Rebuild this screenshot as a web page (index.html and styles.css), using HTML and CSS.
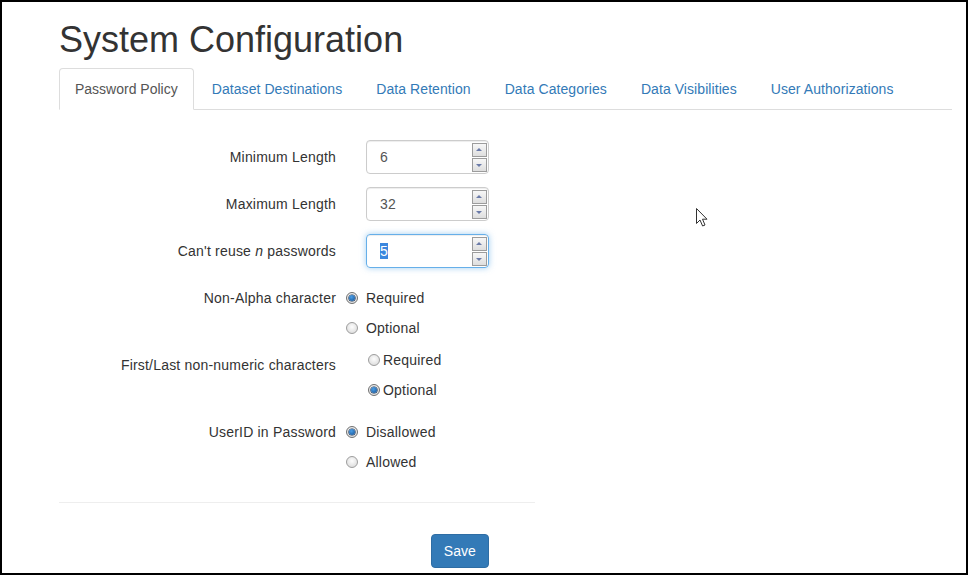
FILE: index.html
```
<!DOCTYPE html>
<html lang="en">
<head>
<meta charset="utf-8">
<title>System Configuration</title>
<link rel="stylesheet" href="styles.css">
</head>
<body>
<div class="frame">
  <div class="container">
    <h1 class="title">System Configuration</h1>
    <ul class="tabs">
      <li class="tab active"><a href="#">Password Policy</a></li>
      <li class="tab"><a href="#">Dataset Destinations</a></li>
      <li class="tab"><a href="#">Data Retention</a></li>
      <li class="tab"><a href="#">Data Categories</a></li>
      <li class="tab"><a href="#">Data Visibilities</a></li>
      <li class="tab"><a href="#">User Authorizations</a></li>
    </ul>
    <form class="form">
      <div class="row field">
        <label class="lbl">Minimum Length</label>
        <div class="num"><span class="val">6</span><span class="spin"><span class="sbtn up"></span><span class="sbtn down"></span></span></div>
      </div>
      <div class="row field">
        <label class="lbl">Maximum Length</label>
        <div class="num"><span class="val">32</span><span class="spin"><span class="sbtn up"></span><span class="sbtn down"></span></span></div>
      </div>
      <div class="row field last">
        <label class="lbl">Can't reuse <i>n</i> passwords</label>
        <div class="num focus"><span class="val"><span class="sel">5</span></span><span class="spin"><span class="sbtn up"></span><span class="sbtn down"></span></span></div>
      </div>
      <div class="row choice g1">
        <label class="lbl">Non-Alpha character</label>
        <div class="opts">
          <div class="opt"><span class="radio on"></span>Required</div>
          <div class="opt"><span class="radio"></span>Optional</div>
        </div>
      </div>
      <div class="row choice g2">
        <label class="lbl">First/Last non-numeric characters</label>
        <div class="opts inline">
          <div class="opt"><span class="radio"></span>Required</div>
          <div class="opt"><span class="radio on"></span>Optional</div>
        </div>
      </div>
      <div class="row choice g3">
        <label class="lbl">UserID in Password</label>
        <div class="opts">
          <div class="opt"><span class="radio on"></span>Disallowed</div>
          <div class="opt"><span class="radio"></span>Allowed</div>
        </div>
      </div>
      <hr class="sep">
      <div class="row actions">
        <button type="button" class="btn">Save</button>
      </div>
    </form>
  </div>
  <svg class="cursor" width="14" height="21" viewBox="0 0 14 21">
    <path d="M1.5 1.5 L1.5 16.5 L5 13 L7.6 19 L10 18 L7.5 12.2 L12 12.2 Z" fill="#fff" stroke="#333" stroke-width="1" stroke-linejoin="round"/>
  </svg>
</div>
</body>
</html>
```
FILE: styles.css
```
* { box-sizing: border-box; }
html, body { margin: 0; padding: 0; background: #fff; }
body {
  font-family: "Liberation Sans", Arial, Helvetica, sans-serif;
  font-size: 14px;
  line-height: 20px;
  letter-spacing: 0.2px;
  color: #333;
}
.frame {
  position: relative;
  width: 968px;
  height: 575px;
  border: 2px solid #000;
  overflow: hidden;
  background: #fff;
}
.container {
  padding-left: 57px;
}
.title {
  margin: 18px 0 8px;
  font-size: 36px;
  line-height: 40px;
  font-weight: 400;
  letter-spacing: 0;
  color: #333;
}
.tabs {
  display: flex;
  width: 893px;
  margin: 0;
  padding: 0;
  list-style: none;
  border-bottom: 1px solid #ddd;
}
.tab {
  margin-bottom: -1px;
}
.tab a {
  display: block;
  padding: 10px 15px;
  margin-right: 2px;
  border: 1px solid transparent;
  border-radius: 4px 4px 0 0;
  color: #337ab7;
  text-decoration: none;
  line-height: 20px;
  letter-spacing: 0.07px;
}
.tab.active a {
  color: #555;
  background: #fff;
  border-color: #ddd #ddd transparent;
  letter-spacing: 0;
}
.form {
  width: 476px;
  padding-top: 30px;
}
.row {
  display: grid;
  grid-template-columns: 277px 123px;
  column-gap: 30px;
}
.lbl {
  text-align: right;
  color: #333;
  white-space: nowrap;
}
.field { margin-bottom: 13px; }
.field.last { margin-bottom: 15px; }
.field .lbl { padding-top: 7px; line-height: 20px; }
.num {
  display: flex;
  align-items: center;
  height: 34px;
  padding-left: 13px;
  border: 1px solid #ccc;
  border-radius: 4px;
  box-shadow: inset 0 1px 1px rgba(0,0,0,.075);
  color: #555;
}
.num.focus {
  border-color: #66afe9;
  box-shadow: inset 0 1px 1px rgba(0,0,0,.075), 0 0 6px rgba(102,175,233,.6);
}
.val { flex: 1; line-height: 20px; }
.sel {
  background: #3b87de;
  color: #fff;
}
.spin {
  display: flex;
  flex-direction: column;
  gap: 1px;
  margin-right: 1px;
}
.sbtn {
  position: relative;
  width: 15px;
  height: 14px;
  border: 1px solid #9c9c9c;
  background: linear-gradient(#f7f7f7, #dedede);
}
.sbtn::after {
  content: "";
  position: absolute;
  left: 3px;
  top: 4px;
  border-left: 3.5px solid transparent;
  border-right: 3.5px solid transparent;
}
.sbtn.up::after { border-bottom: 3px solid #6a7aa8; }
.sbtn.down::after { border-top: 3px solid #6a7aa8; top: 5px; }
.choice .lbl { line-height: 30px; }
.g1 { margin-bottom: 2px; }
.g2 { margin-bottom: 12px; }
.g2 .lbl { padding-top: 5px; }
.opt {
  display: flex;
  align-items: center;
  height: 30px;
  white-space: nowrap;
}
.radio {
  position: relative;
  flex: none;
  width: 12px;
  height: 12px;
  margin-left: -20px;
  margin-right: 8px;
  border: 1px solid #9d9d9d;
  border-radius: 50%;
  background: radial-gradient(circle at 50% 40%, #fdfdfd, #d6d6d6);
}
.inline .radio {
  margin-left: 2px;
  margin-right: 3px;
}
.radio.on {
  border-color: #707070;
}
.radio.on::after {
  content: "";
  position: absolute;
  left: 2px;
  top: 2px;
  width: 6px;
  height: 6px;
  border-radius: 50%;
  background: radial-gradient(circle at 40% 35%, #4a9ee6, #134f92);
  box-shadow: 0 0 0 0.6px #10294a;
}
.sep {
  margin: 25px 0 31px;
  border: 0;
  border-top: 1px solid #eee;
  width: 476px;
}
.actions .btn { grid-column: 2; justify-self: end; }
.btn {
  padding: 6px 12px;
  font-family: inherit;
  font-size: 14px;
  line-height: 20px;
  letter-spacing: 0.1px;
  color: #fff;
  background: #337ab7;
  border: 1px solid #2e6da4;
  border-radius: 4px;
}
.cursor {
  position: absolute;
  left: 693px;
  top: 205px;
}
```
